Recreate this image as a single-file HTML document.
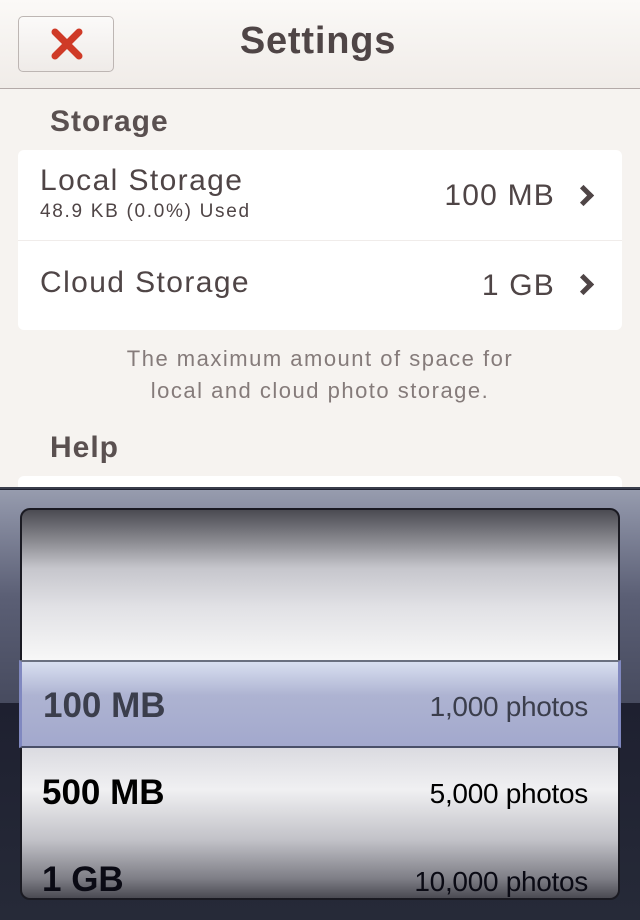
<!DOCTYPE html>
<html><head><meta charset="utf-8"><style>
*{margin:0;padding:0;box-sizing:border-box}
body{width:640px;height:920px;overflow:hidden;background:#f6f3f0;font-family:"Liberation Sans",sans-serif;position:relative;color:#4f4546}
.abs{position:absolute}
#hdr{left:0;top:0;width:640px;height:89px;background:linear-gradient(#fbf9f7,#f0ece8);border-bottom:1px solid #b3aaa8}
#btn{left:18px;top:16px;width:96px;height:56px;border:1px solid #bdb6b3;border-radius:5px;background:linear-gradient(#fbfaf9,#efebe8)}
.t{white-space:nowrap}
#card{left:18px;top:150px;width:604px;height:180px;background:#fff;border-radius:6px}
.chev{width:15px;height:15px;border-right:5px solid #4f4546;border-top:5px solid #4f4546;transform:rotate(45deg)}
</style></head><body>
<div id="hdr" class="abs"></div>
<div id="btn" class="abs">
<svg class="abs" style="left:31px;top:10px" width="34" height="34" viewBox="0 0 34 34"><path d="M5 5L29 29M29 5L5 29" stroke="#cf3a27" stroke-width="7" stroke-linecap="round"/></svg>
</div>
<div class="abs t" style="left:0;width:636px;text-align:center;top:20px;font-size:38px;font-weight:bold;letter-spacing:0.8px;color:#4f4546">Settings</div>
<div class="abs t" style="left:50px;top:105px;font-size:30px;font-weight:bold;letter-spacing:1px;color:#5a5050">Storage</div>
<div id="card" class="abs">
<div class="abs" style="left:0;right:0;top:90px;height:1px;background:#f0ecea"></div>
</div>
<div class="abs t" style="left:40px;top:164px;font-size:30px;letter-spacing:1.4px">Local Storage</div>
<div class="abs t" style="left:40px;top:201px;font-size:19px;letter-spacing:1.7px">48.9 KB (0.0%) Used</div>
<div class="abs t" style="right:85px;top:179px;font-size:30px;letter-spacing:1.2px">100 MB</div>
<div class="abs chev" style="left:576px;top:188px"></div>
<div class="abs t" style="left:40px;top:266px;font-size:30px;letter-spacing:1.4px">Cloud Storage</div>
<div class="abs t" style="right:85px;top:269px;font-size:30px;letter-spacing:1.2px">1 GB</div>
<div class="abs chev" style="left:576px;top:277px"></div>
<div class="abs" style="left:0;width:640px;top:343px;text-align:center;font-size:22px;letter-spacing:1.5px;line-height:32px;color:#857b7a">The maximum amount of space for<br>local and cloud photo storage.</div>
<div class="abs t" style="left:50px;top:431px;font-size:30px;font-weight:bold;letter-spacing:1px;color:#5a5050">Help</div>
<div class="abs" style="left:18px;top:476px;width:604px;height:20px;background:#fff;border-radius:6px"></div>
<div class="abs" style="left:0;top:487px;width:640px;height:433px;background:#1f2130;border-top:2px solid #3a3e4c"></div>
<div class="abs" style="left:0;top:490px;width:640px;height:213px;background:linear-gradient(#979cae,#8a8fa3 10%,#5b5f75 50%,#474b5f)"></div>
<div class="abs" style="left:0;top:703px;width:640px;height:217px;background:linear-gradient(#1e2030,#262a38)"></div>
<div class="abs" style="left:20px;top:508px;width:600px;height:392px;border-radius:10px;border:2px solid #1a1a22;overflow:hidden;background:linear-gradient(#4b4b52 0%,#8a8a90 8%,#c6c6cc 15%,#e1e1e5 25%,#f6f6f6 38%,#fafafa 40%,#d8d8de 60%,#f0f0f2 72%,#c2c2c8 85%,#7e7e86 95%,#4a4a52 100%)">
</div>
<div class="abs" style="left:19px;top:660px;width:602px;height:88px;border-top:2px solid #6a7080;border-bottom:2px solid #4a5068;background:linear-gradient(rgba(215,222,240,0.97),rgba(170,176,208,0.95) 40%,rgba(160,166,204,0.95));border-left:3px solid #8088c0;border-right:3px solid #8088c0"></div>
<div class="abs t" style="left:43px;top:686px;font-size:35px;font-weight:bold;color:#3b3e4c">100 MB</div>
<div class="abs t" style="right:52px;top:691px;font-size:28px;letter-spacing:-0.3px;color:#3b3e4c">1,000 photos</div>
<div class="abs t" style="left:42px;top:773px;font-size:35px;font-weight:bold;color:#000">500 MB</div>
<div class="abs t" style="right:52px;top:778px;font-size:28px;letter-spacing:-0.3px;color:#000">5,000 photos</div>
<div class="abs t" style="left:42px;top:860px;font-size:35px;font-weight:bold;color:#0a0a14">1 GB</div>
<div class="abs t" style="right:52px;top:866px;font-size:28px;letter-spacing:-0.3px;color:#0a0a14">10,000 photos</div>
</body></html>
